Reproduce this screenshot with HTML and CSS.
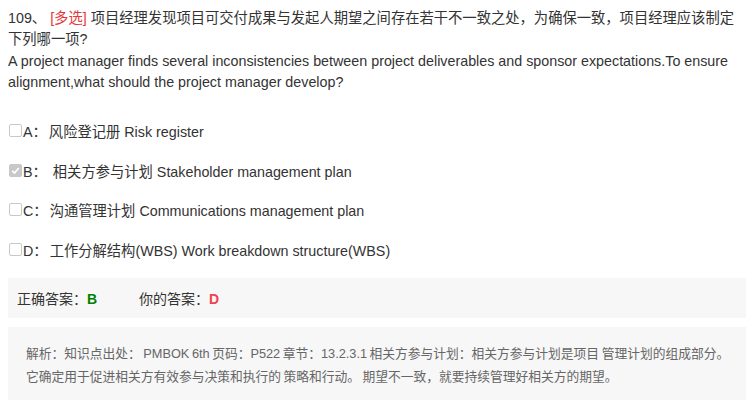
FILE: index.html
```html
<!DOCTYPE html>
<html>
<head>
<meta charset="utf-8">
<link rel="stylesheet" href="styles.css">
</head>
<body>
<div class="question">
  <div class="title">109、 <span class="tag">[多选]</span> 项目经理发现项目可交付成果与发起人期望之间存在若干不一致之处，为确保一致，项目经理应该制定下列哪一项?</div>
  <div class="title-en">A project manager finds several inconsistencies between project deliverables and sponsor expectations.To ensure alignment,what should the project manager develop?</div>
</div>
<ul class="options">
  <li class="option"><span class="box"></span><span class="label">A：</span><span class="text">风险登记册 Risk register</span></li>
  <li class="option"><span class="box checked"><svg viewBox="0 0 11 11" width="11" height="11"><path d="M2.2 5.8 L4.5 8 L8.8 3" fill="none" stroke="#fff" stroke-width="1.7"/></svg></span><span class="label">B：</span><span class="text">&nbsp;相关方参与计划 Stakeholder management plan</span></li>
  <li class="option"><span class="box"></span><span class="label">C：</span><span class="text">沟通管理计划 Communications management plan</span></li>
  <li class="option"><span class="box"></span><span class="label">D：</span><span class="text">工作分解结构(WBS) Work breakdown structure(WBS)</span></li>
</ul>
<div class="answer">
  <span class="ans-item">正确答案：<b class="right">B</b></span>
  <span class="ans-item">你的答案：<b class="wrong">D</b></span>
</div>
<div class="analysis">解析：知识点出处： PMBOK 6th 页码：P522 章节：13.2.3.1 相关方参与计划：相关方参与计划是项目 管理计划的组成部分。它确定用于促进相关方有效参与决策和执行的 策略和行动。 期望不一致，就要持续管理好相关方的期望。</div>
</body>
</html>
```

FILE: styles.css
```css
body {
  margin: 8px 2px 8px 8px;
  font-family: "Liberation Sans", Arial, "Noto Sans CJK SC", sans-serif;
  font-size: 14.3px;
  color: #333;
  background: #fff;
}
.question {
  line-height: 21.3px;
}
.tag {
  color: #e4393c;
}
.options {
  list-style: none;
  margin: 18px 0 0;
  padding: 0;
}
.option {
  display: flex;
  align-items: center;
  height: 39.5px;
}
.box {
  width: 11px;
  height: 11px;
  border: 1px solid #c8c8c8;
  border-radius: 2px;
  background: #fff;
  margin: 0 1px 0 1px;
  display: flex;
  align-items: center;
  justify-content: center;
}
.box.checked {
  background: #c8c8c8;
  border-color: #c8c8c8;
}
.label {
  margin-right: 2px;
}
.answer {
  margin-top: 9px;
  background: #f7f7f7;
  height: 40px;
  display: flex;
  align-items: center;
  padding-left: 9px;
  font-size: 14px;
}
.ans-item {
  width: 122px;
}
.right {
  color: #008000;
}
.wrong {
  color: #f0434f;
}
.analysis {
  margin-top: 9px;
  background: #f7f7f7;
  padding: 15px 16px 20px 18px;
  font-size: 12.75px;
  line-height: 23px;
  color: #666;
  word-spacing: -1px;
}
```
